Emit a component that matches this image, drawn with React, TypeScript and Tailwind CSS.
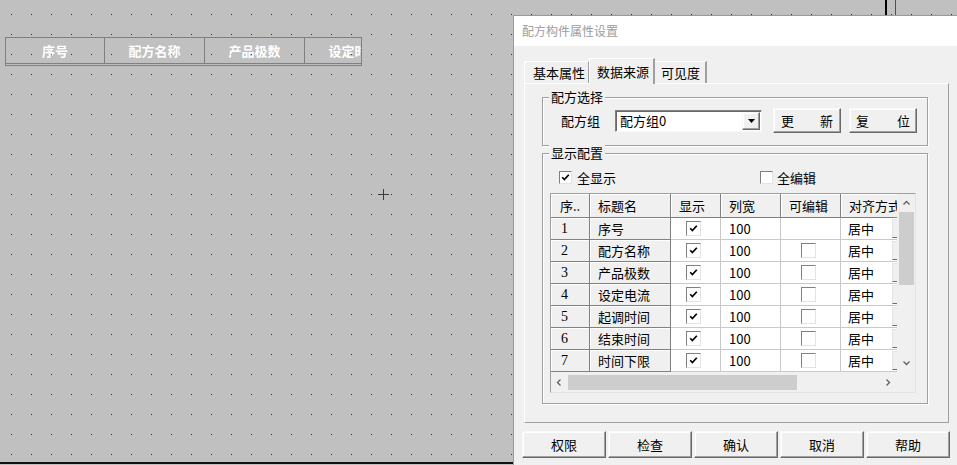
import React from 'react';

const rows = [
    { no: '1', name: '序号', editable: false },
    { no: '2', name: '配方名称', editable: true },
    { no: '3', name: '产品极数', editable: true },
    { no: '4', name: '设定电流', editable: true },
    { no: '5', name: '起调时间', editable: true },
    { no: '6', name: '结束时间', editable: true },
    { no: '7', name: '时间下限', editable: true },
];

const CheckMark = () => (
    <svg width="9" height="9" viewBox="0 0 9 9">
        <path d="M1.2 4.2 L3.4 6.6 L7.8 1.8" stroke="#000" strokeWidth="1.7" fill="none" />
    </svg>
);

const CheckBox: React.FC<{ checked?: boolean; big?: boolean }> = ({ checked, big }) => (
    <span
        className={`inline-flex ${big ? 'w-[15px] h-[15px]' : 'w-[13px] h-[13px]'} shrink-0 items-center justify-center bg-white border border-t-[#808080] border-l-[#808080] border-r-[#e3e3e3] border-b-[#e3e3e3]`}
    >
        {checked && <CheckMark />}
    </span>
);

const raised =
    'bg-[#f0f0f0] border border-t-[#f8f8f8] border-l-[#f8f8f8] border-r-[#696969] border-b-[#696969] shadow-[inset_-1px_-1px_0_#a0a0a0,inset_1px_1px_0_#fff]';

const GroupBox: React.FC<{ title: string; className?: string; children: React.ReactNode }> = ({
    title,
    className,
    children,
}) => (
    <div
        className={`relative border border-[#a0a0a0] shadow-[1px_1px_0_#fff,inset_1px_1px_0_#fff] ${className ?? ''}`}
    >
        <span className="absolute -top-[9px] left-[6px] px-[2px] bg-[#f0f0f0] text-[13px] leading-[16px] text-black">
            {title}
        </span>
        {children}
    </div>
);

const Chevron: React.FC<{ dir: 'up' | 'down' | 'left' | 'right' }> = ({ dir }) => {
    const d = {
        up: 'M1.5 5.5 L4.5 2.5 L7.5 5.5',
        down: 'M1.5 2.5 L4.5 5.5 L7.5 2.5',
        left: 'M5.5 1.5 L2.5 4.5 L5.5 7.5',
        right: 'M2.5 1.5 L5.5 4.5 L2.5 7.5',
    }[dir];
    return (
        <svg width="9" height="9" viewBox="0 0 9 9">
            <path d={d} stroke="#606060" strokeWidth="1.3" fill="none" />
        </svg>
    );
};

const colW = ['w-[39px]', 'w-[81px]', 'w-[50px]', 'w-[60px]', 'w-[60px]', 'w-[70px]'];
const fixedCell =
    'bg-[#f0f0f0] border-r border-b border-[#808080] shadow-[inset_1px_1px_0_#fff] shrink-0 flex items-center';
const dataCell = 'bg-white border-r border-b border-[#c8c8c8] shrink-0 flex items-center';

const Grid = () => (
    <div className="w-[366px] h-[200px] flex flex-col border border-t-[#a0a0a0] border-l-[#a0a0a0] border-r-[#e3e3e3] border-b-[#e3e3e3] bg-[#f0f0f0]">
        <div className="flex h-[178px]">
            <div className="w-[346px] overflow-hidden bg-white">
                <div className="flex h-[24px] w-[400px]">
                    {['序..', '标题名', '显示', '列宽', '可编辑', '对齐方式'].map((h, i) => (
                        <div key={h} className={`${fixedCell} ${colW[i]} ${i === 0 ? 'pl-[9px]' : 'pl-[8px]'}`}>
                            {h}
                        </div>
                    ))}
                </div>
                {rows.map((r) => (
                    <div key={r.no} className="flex h-[22px] w-[400px]">
                        <div className={`${fixedCell} ${colW[0]} pl-[10px] font-['Liberation_Serif',serif] text-[14px]`}>
                            {r.no}
                        </div>
                        <div className={`${fixedCell} ${colW[1]} pl-[8px]`}>{r.name}</div>
                        <div className={`${dataCell} ${colW[2]} justify-center pr-[5px]`}>
                            <CheckBox checked big />
                        </div>
                        <div className={`${dataCell} ${colW[3]} pl-[8px]`}>100</div>
                        <div className={`${dataCell} ${colW[4]} justify-center pr-[5px]`}>
                            {r.editable && <CheckBox big />}
                        </div>
                        <div className={`${dataCell} ${colW[5]} pl-[7px]`}>
                            <span>居中</span>
                            <span className="ml-auto mr-[2px] w-[16px] h-[19px] bg-[#f0f0f0] border border-t-[#e3e3e3] border-l-[#e3e3e3] border-r-[#a0a0a0] border-b-[#696969]" />
                        </div>
                    </div>
                ))}
            </div>
            <div className="w-[18px] flex flex-col items-center bg-[#f0f0f0]">
                <div className="h-[18px] flex items-center justify-center">
                    <Chevron dir="up" />
                </div>
                <div className="w-[15px] h-[73px] bg-[#cdcdcd]" />
                <div className="flex-1" />
                <div className="h-[18px] flex items-center justify-center">
                    <Chevron dir="down" />
                </div>
            </div>
        </div>
        <div className="flex h-[20px] border-t border-[#f0f0f0]">
            <div className="w-[346px] flex items-center bg-[#f0f0f0]">
                <div className="w-[17px] flex justify-center">
                    <Chevron dir="left" />
                </div>
                <div className="w-[229px] h-[15px] bg-[#cdcdcd]" />
                <div className="flex-1" />
                <div className="w-[17px] flex justify-center">
                    <Chevron dir="right" />
                </div>
            </div>
            <div className="w-[18px] bg-[#f0f0f0]" />
        </div>
    </div>
);

const Canvas = () => (
    <>
        <svg className="absolute inset-0" width="957" height="465">
            <defs>
                <pattern id="dots" x="11" y="14" width="20" height="20" patternUnits="userSpaceOnUse">
                    <rect width="1" height="1" fill="#282828" />
                </pattern>
            </defs>
            <rect width="957" height="465" fill="url(#dots)" />
        </svg>

        {/* recipe table widget placed on the canvas */}
        <div className="absolute left-[5px] top-[37px] w-[357px] border-l border-t border-r border-[#808080] overflow-hidden">
            <div className="flex h-[25px] w-[420px]">
                {['序号', '配方名称', '产品极数', '设定时间'].map((t, i) => (
                    <div
                        key={t}
                        className={`${i === 0 ? 'w-[99px]' : 'w-[100px]'} shrink-0 border-r border-[#808080] flex items-center justify-center text-white font-bold text-[13px]`}
                    >
                        {t}
                    </div>
                ))}
            </div>
            <div className="h-[3px] border-y border-[#808080]" />
        </div>

        <svg className="absolute left-[378px] top-[189px]" width="11" height="11">
            <path d="M0 5.5 H11 M5.5 0 V11" stroke="#3a3a3a" strokeWidth="1" />
        </svg>

        <div className="absolute left-[885px] top-0 w-[2px] h-[15px] bg-black" />
        <div className="absolute left-[895px] top-0 w-px h-[15px] bg-[#505050]" />
        <div className="absolute left-0 top-[462px] w-[513px] h-[2px] bg-[#101010]" />
    </>
);

export default function App() {
    return (
        <div className="relative w-[957px] h-[465px] overflow-hidden bg-[#c0c0c0] font-['Noto_Sans_CJK_SC',sans-serif] text-[13px] text-black leading-none">
            <Canvas />

            {/* properties dialog */}
            <div className="absolute left-[513px] top-[15px] w-[444px] h-[450px] border-l border-t border-[#9a9a9a] bg-[#f0f0f0] flex flex-col">
                <div className="h-[30px] bg-white flex items-center pl-[8px] text-[12px] text-[#9c9c9c]">
                    配方构件属性设置
                </div>

                <div className="pl-[10px] pt-[12px]">
                    <div className="flex items-end h-[25px]">
                        <div className="w-[65px] h-[22px] pl-[8px] flex items-center border-t border-l border-[#fff] border-r border-r-[#a0a0a0] bg-[#f0f0f0]">
                            基本属性
                        </div>
                        <div className="relative z-10 -mb-px w-[66px] h-[26px] pl-[7px] flex items-center border-t border-l border-white border-r-2 border-r-[#a0a0a0] bg-[#f0f0f0]">
                            数据来源
                        </div>
                        <div className="w-[52px] h-[22px] pl-[6px] flex items-center border-t border-white border-r-2 border-r-[#a0a0a0] bg-[#f0f0f0]">
                            可见度
                        </div>
                    </div>

                    <div className="w-[425px] h-[340px] border border-t-white border-l-white border-r-[#a0a0a0] border-b-[#a0a0a0] pl-[17px] pt-[13px]">
                        <GroupBox title="配方选择" className="w-[386px] h-[49px]">
                            <div className="flex items-center pt-[10px] pl-[18px]">
                                <span className="w-[54px]">配方组</span>
                                <div className="w-[147px] h-[22px] flex items-center bg-white border border-t-[#808080] border-l-[#808080] border-r-[#f8f8f8] border-b-[#f8f8f8] shadow-[inset_1px_1px_0_#696969]">
                                    <span className="pl-[4px] flex-1">配方组0</span>
                                    <span className={`${raised} w-[18px] h-[18px] mr-[1px] flex items-center justify-center`}>
                                        <svg width="7" height="4" viewBox="0 0 7 4">
                                            <path d="M0 0 H7 L3.5 4 Z" fill="#000" />
                                        </svg>
                                    </span>
                                </div>
                                <button className={`${raised} ml-[11px] w-[68px] h-[25px] flex items-center justify-between px-[7px]`}>
                                    <span>更</span>
                                    <span>新</span>
                                </button>
                                <button className={`${raised} ml-[8px] w-[68px] h-[25px] flex items-center justify-between px-[6px]`}>
                                    <span>复</span>
                                    <span>位</span>
                                </button>
                            </div>
                        </GroupBox>

                        <GroupBox title="显示配置" className="mt-[7px] w-[386px] h-[251px]">
                            <div className="flex items-center pt-[16px] pl-[16px] h-[30px]">
                                <CheckBox checked />
                                <span className="ml-[5px] w-[183px]">全显示</span>
                                <CheckBox />
                                <span className="ml-[4px]">全编辑</span>
                            </div>
                            <div className="pl-[7px] pt-[9px]">
                                <Grid />
                            </div>
                        </GroupBox>
                    </div>
                </div>

                <div className="flex gap-[2px] pl-[8px] mt-[8px]">
                    {['权限', '检查', '确认', '取消', '帮助'].map((b) => (
                        <button key={b} className={`${raised} w-[84px] h-[27px] flex items-center justify-center`}>
                            {b}
                        </button>
                    ))}
                </div>
            </div>
        </div>
    );
}
